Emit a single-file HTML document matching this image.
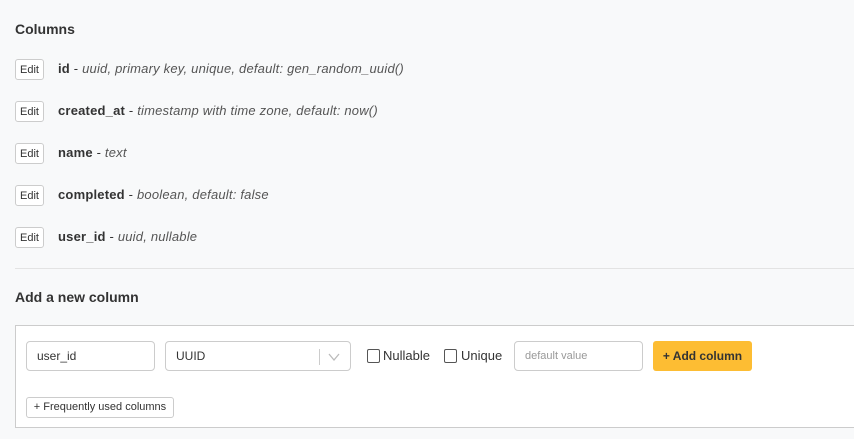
<!DOCTYPE html>
<html><head><style>
body{margin:0;width:854px;height:439px;background:#f8f9fa;font-family:"Liberation Sans",sans-serif;color:#333;overflow:hidden;position:relative}
.a{position:absolute}
.h{font-weight:bold;font-size:14px;color:#333}
.edit{position:absolute;left:15px;width:29px;height:21px;border:1px solid #ccc;border-radius:3px;background:#fff;font-size:11px;line-height:21px;text-align:center;box-sizing:border-box;color:#333}
.row{position:absolute;left:58px;font-size:13px;color:#333;letter-spacing:0.2px}
.row b{font-weight:bold}
.row i{color:#555}
.inp{position:absolute;top:341px;height:30px;box-sizing:border-box;border:1px solid #ccc;border-radius:4px;background:#fff;font-size:12px;line-height:28px;padding-left:10px}
.cb{position:absolute;top:349px;width:11px;height:12px;border:1px solid #555;border-radius:2px;background:#fff}
</style></head><body>
<div class="a h" style="left:15px;top:21px">Columns</div>
<div class="edit" style="top:59px">Edit</div><div class="row" style="top:61px"><b>id</b> - <i>uuid, primary key, unique, default: gen_random_uuid()</i></div>
<div class="edit" style="top:101px">Edit</div><div class="row" style="top:103px"><b>created_at</b> - <i>timestamp with time zone, default: now()</i></div>
<div class="edit" style="top:143px">Edit</div><div class="row" style="top:145px"><b>name</b> - <i>text</i></div>
<div class="edit" style="top:185px">Edit</div><div class="row" style="top:187px"><b>completed</b> - <i>boolean, default: false</i></div>
<div class="edit" style="top:227px">Edit</div><div class="row" style="top:229px"><b>user_id</b> - <i>uuid, nullable</i></div>
<div class="a" style="left:15px;right:0;top:268px;border-top:1px solid #e3e3e3"></div>
<div class="a h" style="left:15px;top:289px">Add a new column</div>
<div class="a" style="left:15px;top:325px;width:845px;height:103px;background:#fff;border:1px solid #ccc;box-sizing:border-box"></div>
<div class="inp" style="left:26px;width:129px">user_id</div>
<div class="inp" style="left:165px;width:186px">UUID
<span class="a" style="left:153px;top:7px;height:16px;border-left:1px solid #ccc"></span>
<svg class="a" style="left:162px;top:10px" width="12" height="10"><path d="M1 2 L6 8 L11 2" fill="none" stroke="#bbb" stroke-width="1.3"/></svg></div>
<div class="cb" style="left:367px"></div><div class="a" style="left:383px;top:348px;font-size:13px">Nullable</div>
<div class="cb" style="left:444px"></div><div class="a" style="left:461px;top:348px;font-size:13px">Unique</div>
<div class="inp" style="left:514px;width:129px;color:#999;font-size:11px">default value</div>
<div class="a" style="left:653px;top:341px;width:99px;height:30px;background:#fdbd33;border-radius:3px;font-size:12px;font-weight:bold;line-height:30px;text-align:center;color:#333">+ Add column</div>
<div class="a" style="left:26px;top:397px;width:148px;height:21px;border:1px solid #ccc;border-radius:3px;box-sizing:border-box;font-size:11px;line-height:19px;text-align:center;background:#fff">+ Frequently used columns</div>
</body></html>
